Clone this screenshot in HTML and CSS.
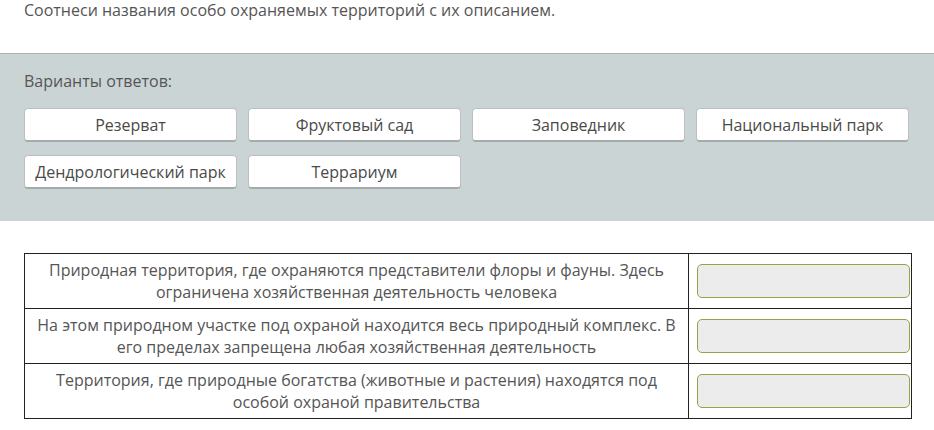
FILE: index.html
```html
<!DOCTYPE html>
<html>
  <head>
    <meta charset="utf-8">
    <title>Соотнеси названия</title>
    <link rel="stylesheet" href="styles.css">
  </head>
  <body>
    <p class="question">Соотнеси названия особо охраняемых территорий с их описанием.</p>

    <div class="answers">
      <p class="answers-title">Варианты ответов:</p>
      <div class="answers-list">
        <div class="answer">Резерват</div>
        <div class="answer">Фруктовый сад</div>
        <div class="answer">Заповедник</div>
        <div class="answer">Национальный парк</div>
        <div class="answer">Дендрологический парк</div>
        <div class="answer">Террариум</div>
      </div>
    </div>

    <table class="match-table">
      <tr>
        <td class="desc">Природная территория, где охраняются представители флоры и фауны. Здесь ограничена хозяйственная деятельность человека</td>
        <td class="slot"><div class="drop"></div></td>
      </tr>
      <tr>
        <td class="desc">На этом природном участке под охраной находится весь природный комплекс. В его пределах запрещена любая хозяйственная деятельность</td>
        <td class="slot"><div class="drop"></div></td>
      </tr>
      <tr>
        <td class="desc">Территория, где природные богатства (животные и растения) находятся под особой охраной правительства</td>
        <td class="slot"><div class="drop"></div></td>
      </tr>
    </table>
  </body>
</html>
```

FILE: styles.css
```css
body {
  margin: 0;
  background: #fff;
  font-family: "Open Sans", "Liberation Sans", sans-serif;
  font-size: 16px;
  color: #555;
}

.question {
  margin: 0;
  padding: 0 24px;
  height: 53px;
  line-height: 21px;
}

.answers {
  background-color: #cbd4d5;
  border-top: 1px solid #a9b3b4;
  height: 168px;
  padding: 0 24px;
  box-sizing: border-box;
}

.answers-title {
  margin: 0;
  padding-top: 16px;
  line-height: 22px;
  height: 54px;
  box-sizing: border-box;
}

.answers-list {
  display: grid;
  grid-template-columns: repeat(4, 213px);
  column-gap: 11px;
  row-gap: 13px;
}

.answer {
  height: 34px;
  line-height: 32px;
  box-sizing: border-box;
  background: #fff;
  border: 1px solid #b9c0c1;
  border-bottom: 2px solid #a3abac;
  border-radius: 4px;
  text-align: center;
  color: #4a4a4a;
  white-space: nowrap;
}

.match-table {
  margin: 32px 0 0 24px;
  border-collapse: collapse;
  width: 888px;
}

.match-table td {
  border: 1px solid #222;
  height: 54px;
  padding: 0;
}

.desc {
  width: 663px;
  text-align: center;
  line-height: 22px;
  padding: 0 10px !important;
}

.slot {
  padding: 0 1px 0 8px !important;
}

.drop {
  width: 213px;
  height: 34px;
  box-sizing: border-box;
  background: #ececec;
  border: 1px solid #8fa646;
  border-radius: 5px;
}
```
